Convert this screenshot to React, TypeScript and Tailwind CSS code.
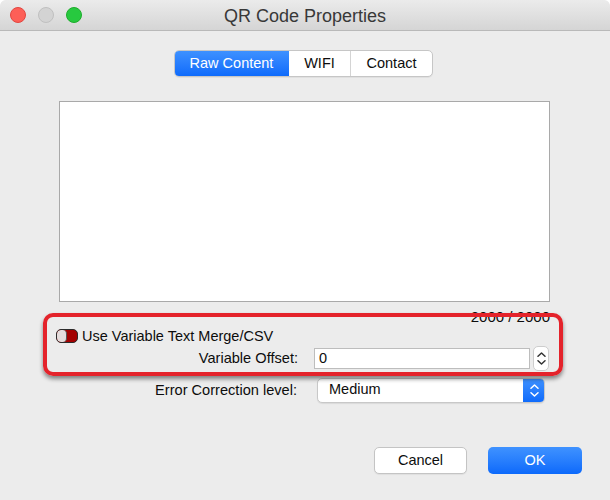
import React from "react";

function Chevrons({ color, size = 7 }: { color: string; size?: number }) {
  return (
    <div className="flex flex-col items-center gap-[3px]">
      <svg width={size + 2} height={size - 2} viewBox="0 0 9 5">
        <path d="M1 4.2 L4.5 1 L8 4.2" fill="none" stroke={color} strokeWidth="1.5" strokeLinecap="round" strokeLinejoin="round" />
      </svg>
      <svg width={size + 2} height={size - 2} viewBox="0 0 9 5">
        <path d="M1 0.8 L4.5 4 L8 0.8" fill="none" stroke={color} strokeWidth="1.5" strokeLinecap="round" strokeLinejoin="round" />
      </svg>
    </div>
  );
}

export default function App() {
  return (
    <div className="w-[610px] h-[500px] bg-white">
      <div className="relative w-[610px] h-[500px] rounded-t-[6px] bg-[#ececec] overflow-hidden flex flex-col font-['Liberation_Sans',Arial,sans-serif] text-[#0d0d0d]">
        {/* Title bar */}
        <div className="h-[31px] shrink-0 grid grid-cols-[1fr_auto_1fr] items-center border-b border-[#b9b9b9] bg-gradient-to-b from-[#ebebeb] to-[#d5d5d5] rounded-t-[6px]">
          <div className="flex items-center gap-[12px] pl-[10px]">
            <div className="w-[16px] h-[16px] rounded-full bg-[#fd5f57] border border-[#e2463f]" />
            <div className="w-[16px] h-[16px] rounded-full bg-[#d3d3d3] border border-[#c0c0c0]" />
            <div className="w-[16px] h-[16px] rounded-full bg-[#27c93f] border border-[#1dad2b]" />
          </div>
          <div className="text-[18px] text-[#383838] leading-none pt-[1px]">QR Code Properties</div>
          <div />
        </div>

        {/* Segmented control */}
        <div className="mt-[19px] ml-[174px] flex w-[259px] h-[27px] rounded-[5px] border border-[#c6c6c6] bg-white text-[14.5px] overflow-hidden shadow-[0_1px_0_rgba(0,0,0,0.05)]">
          <div className="w-[115px] flex items-center justify-center text-white bg-gradient-to-b from-[#3f92ff] to-[#0b69fb] -my-px -ml-px">Raw Content</div>
          <div className="w-[62px] flex items-center justify-center border-r border-[#d4d4d4] text-[#0d0d0d]">WIFI</div>
          <div className="flex-1 flex items-center justify-center text-[#0d0d0d]">Contact</div>
        </div>

        {/* Text area */}
        <div className="mt-[24px] ml-[59px] w-[491px] h-[201px] bg-white border border-[#a9a9a9]" />

        {/* Counter */}
        <div className="mt-[7px] ml-[59px] w-[491px] h-[16px] text-right text-[15px] leading-[16px] text-[#0d0d0d]">2000 / 2000</div>

        {/* Toggle row */}
        <div className="mt-[3px] ml-[56px] h-[16px] flex items-center gap-[4px]">
          <div className="w-[22px] h-[14px] rounded-[5px] border-[1.5px] border-[#2b2b2b] bg-[#a30000] flex overflow-hidden">
            <div className="w-[10px] h-full rounded-[4px] bg-[#e5dcdc] border-r border-[#555]" />
          </div>
          <span className="text-[14.5px] leading-[16px]">Use Variable Text Merge/CSV</span>
        </div>

        {/* Variable offset row */}
        <div className="mt-[2px] h-[25px] flex items-center">
          <div className="w-[298px] text-right text-[14.6px]">Variable Offset:</div>
          <div className="ml-[16px] w-[216px] h-[21px] bg-white border border-[#bdbdbd] flex items-center px-[4px] text-[14.5px]">0</div>
          <div className="ml-[3px] w-[16px] h-[25px] rounded-[5px] bg-white border border-[#cdcdcd] flex items-center justify-center">
            <Chevrons color="#333" />
          </div>
        </div>

        {/* Error correction row */}
        <div className="mt-[7px] h-[25px] flex items-center">
          <div className="w-[297px] text-right text-[14.6px]">Error Correction level:</div>
          <div className="ml-[20px] w-[228px] h-[25px] rounded-[5px] bg-white border border-[#c8c8c8] flex items-stretch overflow-hidden shadow-[0_1px_1px_rgba(0,0,0,0.08)]">
            <div className="flex-1 pl-[11px] text-[14.5px] leading-[20px]">Medium</div>
            <div className="w-[22px] -my-px -mr-px bg-gradient-to-b from-[#3f92ff] to-[#0b69fb] flex items-center justify-center">
              <Chevrons color="#ffffff" />
            </div>
          </div>
        </div>

        {/* Buttons */}
        <div className="mt-[44px] ml-[374px] flex gap-[21px]">
          <div className="w-[93px] h-[27px] rounded-[5px] bg-white border border-[#c4c4c4] flex items-center justify-center text-[14.5px] shadow-[0_1px_1px_rgba(0,0,0,0.06)]">Cancel</div>
          <div className="w-[94px] h-[27px] rounded-[5px] bg-gradient-to-b from-[#3f92ff] to-[#0b69fb] flex items-center justify-center text-[14.5px] text-white">OK</div>
        </div>

        {/* Red annotation box */}
        <div className="absolute left-[43px] top-[313px] w-[520px] h-[63px] rounded-[10px] border-[4px] border-[#e4232b] shadow-[0_3px_4px_rgba(0,0,0,0.45)] pointer-events-none" />
      </div>
    </div>
  );
}
